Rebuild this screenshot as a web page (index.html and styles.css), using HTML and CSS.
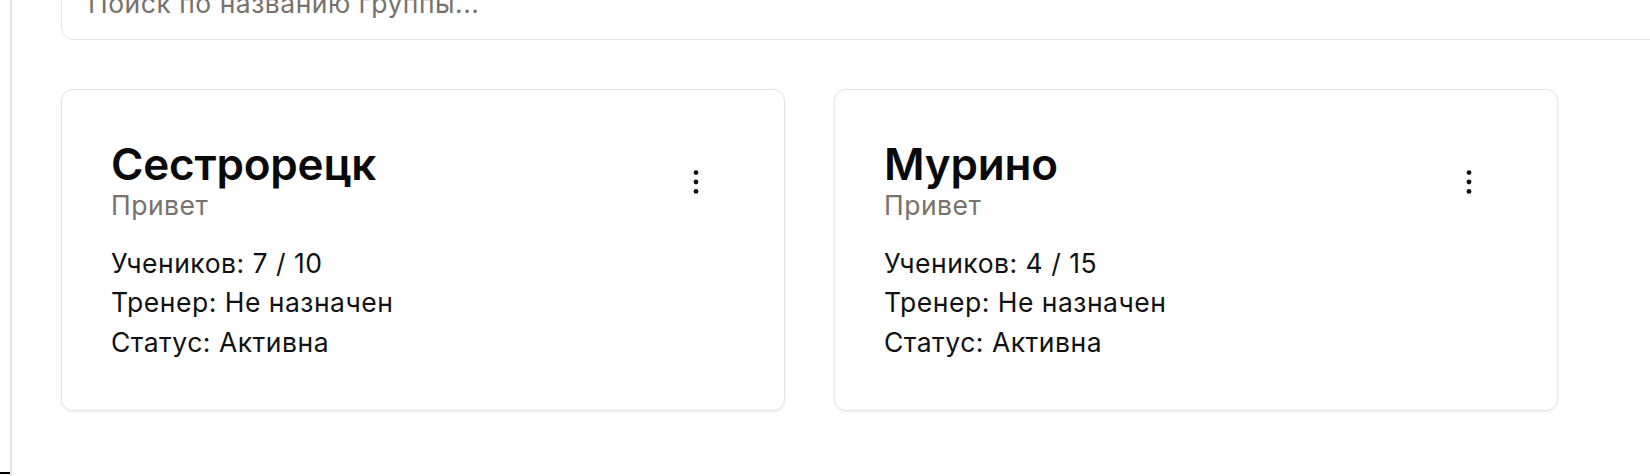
FILE: index.html
```html
<!DOCTYPE html>
<html lang="ru">
<head>
<meta charset="utf-8">
<title>Группы</title>
<link rel="stylesheet" href="styles.css">
</head>
<body>
<div class="app">
  <aside class="sidebar">
    <div class="sidebar-mark"></div>
  </aside>
  <main class="main">
    <input class="search" type="text" placeholder="Поиск по названию группы...">
    <section class="grid">
      <article class="card">
        <header class="card-head">
          <div class="card-titles">
            <h2 class="card-title">Сестрорецк</h2>
            <div class="card-sub">Привет</div>
          </div>
          <button class="menu-btn" aria-label="Меню">
            <svg width="40" height="40" viewBox="0 0 40 40"><circle cx="20" cy="10.6" r="2.4"/><circle cx="20" cy="20" r="2.4"/><circle cx="20" cy="29.4" r="2.4"/></svg>
          </button>
        </header>
        <div class="card-body">
          <p class="line">Учеников: 7 / 10</p>
          <p class="line">Тренер: Не назначен</p>
          <p class="line">Статус: Активна</p>
        </div>
      </article>
      <article class="card">
        <header class="card-head">
          <div class="card-titles">
            <h2 class="card-title">Мурино</h2>
            <div class="card-sub">Привет</div>
          </div>
          <button class="menu-btn" aria-label="Меню">
            <svg width="40" height="40" viewBox="0 0 40 40"><circle cx="20" cy="10.6" r="2.4"/><circle cx="20" cy="20" r="2.4"/><circle cx="20" cy="29.4" r="2.4"/></svg>
          </button>
        </header>
        <div class="card-body">
          <p class="line">Учеников: 4 / 15</p>
          <p class="line">Тренер: Не назначен</p>
          <p class="line">Статус: Активна</p>
        </div>
      </article>
    </section>
  </main>
</div>
</body>
</html>
```

FILE: styles.css
```css
* { box-sizing: border-box; }

html, body {
  margin: 0;
  padding: 0;
  background: #ffffff;
  overflow: hidden;
}

body {
  font-family: Inter, "Liberation Sans", Arial, sans-serif;
  color: #111;
}

.app {
  display: flex;
  height: 476px;
}

.sidebar {
  flex: 0 0 12px;
  border-right: 2px solid #e5e5e5;
  display: flex;
  flex-direction: column;
  justify-content: flex-end;
  padding-bottom: 2px;
}

.sidebar-mark {
  height: 2px;
  background: #000;
}

.main {
  flex: 1 1 auto;
  min-width: 0;
  padding-left: 49px;
  margin-top: -34px;
}

.search {
  display: block;
  width: 1700px;
  height: 74px;
  padding: 0 26px 1px;
  border: 1px solid #e4e4e4;
  border-radius: 12px;
  font-family: inherit;
  font-size: 26.5px;
  letter-spacing: 0.5px;
  color: #111;
  background: #fff;
  outline: none;
}

.search::placeholder {
  color: #78716c;
}

.grid {
  display: grid;
  grid-template-columns: repeat(2, 724px);
  gap: 49px;
  margin-top: 49px;
}

.card {
  border: 1px solid #e4e4e4;
  border-radius: 12px;
  box-shadow: 0 1px 3px rgba(0, 0, 0, 0.07);
  padding: 49px 49px 47px;
  height: 322px;
  background: #fff;
}

.card-head {
  display: flex;
  align-items: center;
  justify-content: space-between;
}

.card-title {
  margin: 0;
  font-size: 44px;
  line-height: 50px;
  font-weight: 600;
  color: #0a0a0a;
  letter-spacing: -0.2px;
}

.card-sub {
  font-size: 26.5px;
  line-height: 32px;
  letter-spacing: 0.5px;
  color: #78716c;
}

.menu-btn {
  width: 40px;
  height: 40px;
  padding: 0;
  margin: 4px 19px 0 0;
  border: 0;
  background: transparent;
  display: flex;
  align-items: center;
  justify-content: center;
  fill: #111;
}

.card-body {
  margin-top: 23px;
}

.line {
  margin: 0;
  font-size: 26.5px;
  line-height: 39.25px;
  letter-spacing: 0.5px;
  color: #111;
}
```
